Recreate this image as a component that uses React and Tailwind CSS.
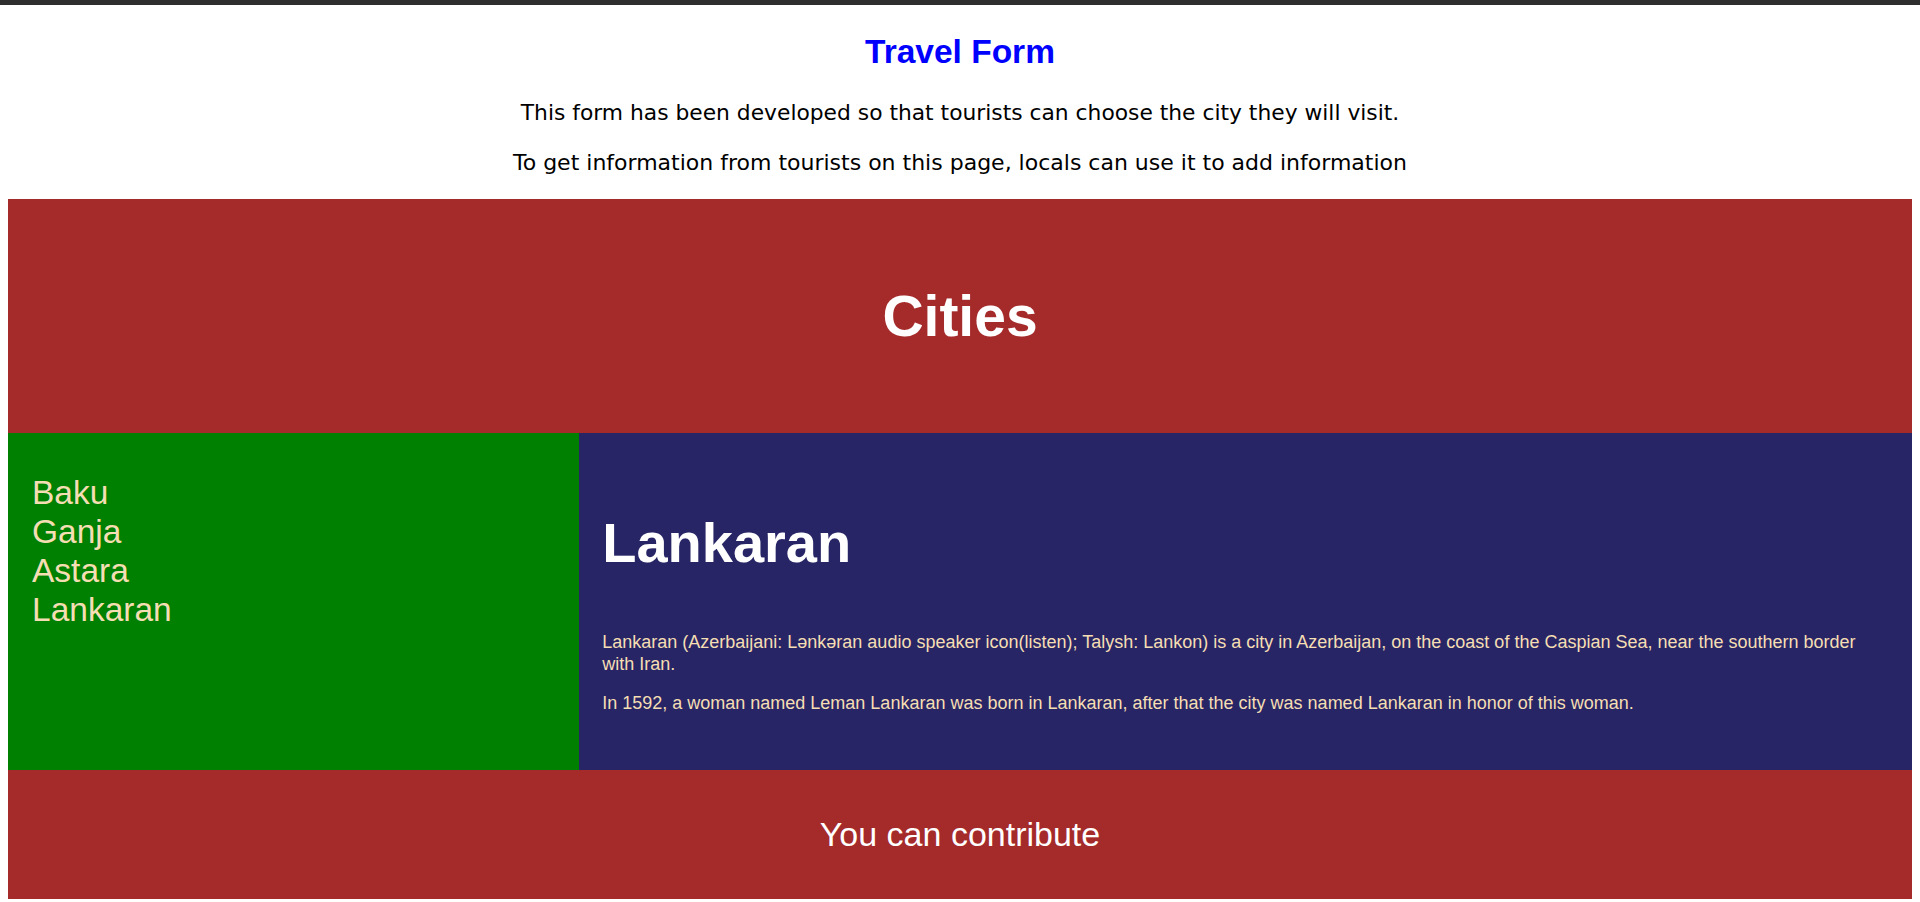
const cities = ["Baku", "Ganja", "Astara", "Lankaran"];

const App = () => {
  return (
    <div className="min-h-screen bg-white">
      <div className="h-[5px] bg-[#2e2e2e]" />

      <div className="px-2">
        <h1 className="mt-[28px] text-center font-['Liberation_Sans',Arial,sans-serif] text-[33.5px] font-bold leading-[38px] text-[#0000ff]">
          Travel Form
        </h1>
        <p className="mt-[29px] text-center font-['DejaVu_Sans',Verdana,sans-serif] text-[21.8px] leading-[26px] text-black">
          This form has been developed so that tourists can choose the city they will visit.
        </p>
        <p className="mt-[24px] text-center font-['DejaVu_Sans',Verdana,sans-serif] text-[22px] leading-[26px] text-black">
          To get information from tourists on this page, locals can use it to add information
        </p>

        <div className="mt-[23px] font-['Liberation_Sans',Arial,sans-serif]">
          <div className="flex h-[234px] items-center justify-center bg-[#a52a2a]">
            <h2 className="text-[57px] font-bold leading-[64px] text-white">Cities</h2>
          </div>

          <div className="flex h-[337px]">
            <div className="w-[30%] bg-[#008000] px-6 pt-[40px]">
              <ul>
                {cities.map((city) => (
                  <li key={city} className="text-[33.5px] leading-[39px] text-[#f5deb3]">
                    {city}
                  </li>
                ))}
              </ul>
            </div>

            <div className="flex-1 bg-[#272566] px-[23px] pt-[78px]">
              <h2 className="text-[56px] font-bold leading-[64px] text-white">Lankaran</h2>
              <p className="mt-[56px] text-[18px] leading-[22px] text-[#f5deb3]">
                Lankaran (Azerbaijani: Lənkəran audio speaker icon(listen); Talysh: Lankon) is a city in
                Azerbaijan, on the coast of the Caspian Sea, near the southern border with Iran.
              </p>
              <p className="mt-[17px] text-[18px] leading-[22px] text-[#f5deb3]">
                In 1592, a woman named Leman Lankaran was born in Lankaran, after that the city was named
                Lankaran in honor of this woman.
              </p>
            </div>
          </div>

          <div className="flex h-[129px] items-center justify-center bg-[#a52a2a] pb-[2px]">
            <p className="text-[34px] leading-[38px] text-white">You can contribute</p>
          </div>
        </div>
      </div>
    </div>
  );
};

export default App;
